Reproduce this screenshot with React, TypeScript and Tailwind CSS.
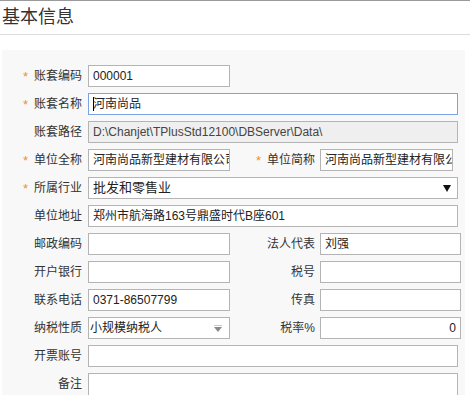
import React from "react";

const font = { fontFamily: '"Liberation Sans", "Noto Sans CJK SC", sans-serif' };

function Star() {
  return <span className="mr-[6px] text-[13px] leading-none text-[#f0902c]">*</span>;
}

function Label({ text, req, w }: { text: string; req?: boolean; w: string }) {
  return (
    <div className={`${w} flex h-[22px] shrink-0 items-center justify-end text-[12px] text-[#333]`}>
      {req && <Star />}
      <span>{text}</span>
    </div>
  );
}

function Box({
  w,
  value,
  focus,
  disabled,
  right,
  caret,
}: {
  w: string;
  value?: string;
  focus?: boolean;
  disabled?: boolean;
  right?: boolean;
  caret?: boolean;
}) {
  return (
    <div
      className={`${w} flex h-[22px] shrink-0 items-center overflow-hidden whitespace-nowrap border px-[4px] text-[12px] text-[#222]
        ${focus ? "border-[#7da2e3]" : "border-[#b4b4b4]"}
        ${disabled ? "bg-[#efefef] text-[#444]" : "bg-white"}
        ${right ? "justify-end" : ""}`}
    >
      {caret && <span className="mr-[-1px] h-[14px] w-px shrink-0 bg-black" />}
      {value}
    </div>
  );
}

function Select({ w, value, light }: { w: string; value: string; light?: boolean }) {
  return (
    <div
      className={`${w} flex h-[22px] shrink-0 items-center justify-between border border-[#b4b4b4] bg-white text-[#222] ${
        light ? "pl-[1px] pr-[7px] text-[12px]" : "pl-[4px] pr-[6px] text-[13px]"
      }`}
    >
      <span>{value}</span>
      {light ? (
        <span className="flex flex-col items-center">
          <span className="mb-px h-px w-[8px] bg-[#c8c8c8]" />
          <span className="h-0 w-0 border-x-[4px] border-t-[5px] border-x-transparent border-t-[#8a8a8a]" />
        </span>
      ) : (
        <span className="h-0 w-0 border-x-[4px] border-t-[7px] border-x-transparent border-t-[#111]" />
      )}
    </div>
  );
}

export default function App() {
  return (
    <div className="h-[395px] w-[470px] overflow-hidden bg-white" style={font}>
      <div className="border-t border-[#9a9a9a]">
        <div className="flex h-[34px] items-center border-b border-[#dcdcdc] pl-[2px] text-[18px] text-[#333]">
          基本信息
        </div>
      </div>
      <div className="ml-[2px] mt-[15px] w-[463px] bg-[#f8f8f8] pt-[15px]">
        <div className="flex flex-col gap-[6px]">
          <div className="flex">
            <Label w="w-[80px]" text="账套编码" req />
            <div className="w-[6px]" />
            <Box w="w-[142px]" value="000001" />
          </div>
          <div className="flex">
            <Label w="w-[80px]" text="账套名称" req />
            <div className="w-[6px]" />
            <Box w="w-[370px]" value="河南尚品" focus caret />
          </div>
          <div className="flex">
            <Label w="w-[80px]" text="账套路径" />
            <div className="w-[6px]" />
            <Box w="w-[370px]" value="D:\Chanjet\TPlusStd12100\DBServer\Data\" disabled />
          </div>
          <div className="flex">
            <Label w="w-[80px]" text="单位全称" req />
            <div className="w-[6px]" />
            <Box w="w-[142px]" value="河南尚品新型建材有限公司" />
            <Label w="w-[85px]" text="单位简称" req />
            <div className="w-[5px]" />
            <Box w="w-[133px]" value="河南尚品新型建材有限公司" />
          </div>
          <div className="flex">
            <Label w="w-[80px]" text="所属行业" req />
            <div className="w-[6px]" />
            <Select w="w-[370px]" value="批发和零售业" />
          </div>
          <div className="flex">
            <Label w="w-[80px]" text="单位地址" />
            <div className="w-[6px]" />
            <Box w="w-[370px]" value="郑州市航海路163号鼎盛时代B座601" />
          </div>
          <div className="flex">
            <Label w="w-[80px]" text="邮政编码" />
            <div className="w-[6px]" />
            <Box w="w-[142px]" />
            <Label w="w-[85px]" text="法人代表" />
            <div className="w-[5px]" />
            <Box w="w-[141px]" value="刘强" />
          </div>
          <div className="flex">
            <Label w="w-[80px]" text="开户银行" />
            <div className="w-[6px]" />
            <Box w="w-[142px]" />
            <Label w="w-[85px]" text="税号" />
            <div className="w-[5px]" />
            <Box w="w-[141px]" />
          </div>
          <div className="flex">
            <Label w="w-[80px]" text="联系电话" />
            <div className="w-[6px]" />
            <Box w="w-[142px]" value="0371-86507799" />
            <Label w="w-[85px]" text="传真" />
            <div className="w-[5px]" />
            <Box w="w-[141px]" />
          </div>
          <div className="flex">
            <Label w="w-[80px]" text="纳税性质" />
            <div className="w-[6px]" />
            <Select w="w-[142px]" value="小规模纳税人" light />
            <Label w="w-[85px]" text="税率%" />
            <div className="w-[5px]" />
            <Box w="w-[141px]" value="0" right />
          </div>
          <div className="flex">
            <Label w="w-[80px]" text="开票账号" />
            <div className="w-[6px]" />
            <Box w="w-[370px]" />
          </div>
          <div className="flex items-start">
            <Label w="w-[80px]" text="备注" />
            <div className="w-[6px]" />
            <div className="h-[50px] w-[370px] border border-[#b4b4b4] bg-white" />
          </div>
        </div>
      </div>
    </div>
  );
}
